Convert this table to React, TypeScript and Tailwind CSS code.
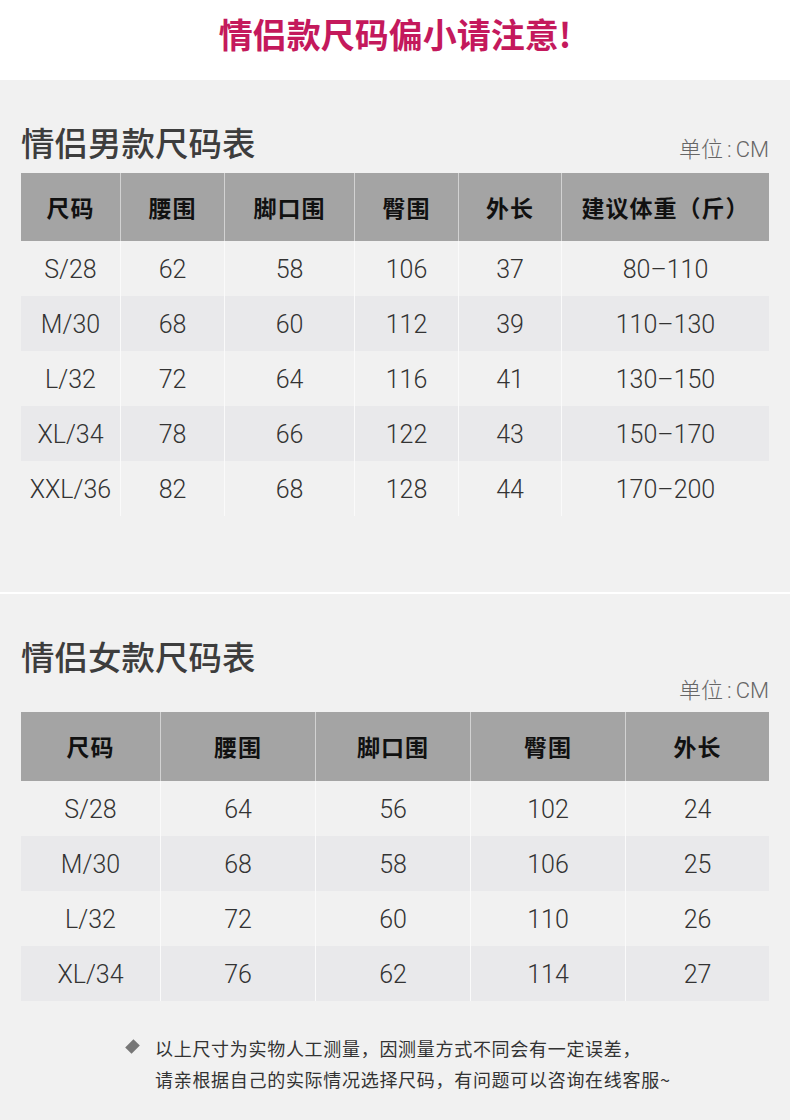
const cjk = "font-['Noto_Sans_CJK_SC',sans-serif]"
const num = "font-['Roboto','Noto_Sans_CJK_SC',sans-serif]"

const menHead = ["尺码", "腰围", "脚口围", "臀围", "外长", "建议体重（斤）"]
const menRows = [
  ["S/28", "62", "58", "106", "37", "80–110"],
  ["M/30", "68", "60", "112", "39", "110–130"],
  ["L/32", "72", "64", "116", "41", "130–150"],
  ["XL/34", "78", "66", "122", "43", "150–170"],
  ["XXL/36", "82", "68", "128", "44", "170–200"],
]

const womenHead = ["尺码", "腰围", "脚口围", "臀围", "外长"]
const womenRows = [
  ["S/28", "64", "56", "102", "24"],
  ["M/30", "68", "58", "106", "25"],
  ["L/32", "72", "60", "110", "26"],
  ["XL/34", "76", "62", "114", "27"],
]

const SizeTable = ({ head, rows, cols, headH }: { head: string[]; rows: string[][]; cols: string; headH: string }) => (
  <div className="w-full">
    <div className={`grid ${cols} ${headH} bg-[#a4a4a4]`}>
      {head.map((h, i) => (
        <div
          key={h}
          className={`flex items-center justify-center text-[23px] font-bold tracking-[1px] text-[#111] ${cjk} ${i > 0 ? "border-l border-[#d2d2d2]" : ""}`}
        >
          {h}
        </div>
      ))}
    </div>
    {rows.map((r, ri) => (
      <div key={r[0]} className={`grid ${cols} h-[55px] ${ri % 2 === 1 ? "bg-[#e9e9eb]" : "bg-[#f1f1f1]"}`}>
        {r.map((c, i) => (
          <div
            key={i}
            className={`flex items-center justify-center pt-[3px] text-[25px] font-light text-[#333] ${num} ${i > 0 ? "border-l border-[#fafafa]" : ""}`}
          >
            {c}
          </div>
        ))}
      </div>
    ))}
  </div>
)

const Unit = () => (
  <span className={`text-[22px] leading-[22px] font-light text-[#666] ${num}`}>
    单位<span className="mx-[4px]">:</span>CM
  </span>
)

export default function App() {
  return (
    <div className="w-[790px] h-[1120px] bg-[#f1f1f1] overflow-hidden">
      {/* banner */}
      <div className="h-[80px] bg-white pt-[12px]">
        <div className={`text-center text-[34px] leading-[44px] font-bold text-[#c4195c] ${cjk}`}>
          情侣款尺码偏小请注意!
        </div>
      </div>

      {/* men */}
      <div className="h-[512px] px-[21px] pt-[42px]">
        <div className="flex items-end justify-between">
          <div className={`h-[40px] text-[33.5px] leading-[40px] font-medium text-[#3d3d3d] ${cjk}`}>情侣男款尺码表</div>
          <div className="leading-[22px]">
            <Unit />
          </div>
        </div>
        <div className="mt-[11px]">
          <SizeTable
            head={menHead}
            rows={menRows}
            headH="h-[68px]"
            cols="grid-cols-[99px_104px_130px_104px_103px_1fr]"
          />
        </div>
      </div>

      <div className="h-[2px] bg-white" />

      {/* women */}
      <div className="px-[21px] pt-[42px]">
        <div className={`h-[40px] text-[33.5px] leading-[40px] font-medium text-[#3d3d3d] ${cjk}`}>情侣女款尺码表</div>
        <div className="mt-[4px] text-right leading-[22px]">
          <Unit />
        </div>
        <div className="mt-[9px]">
          <SizeTable
            head={womenHead}
            rows={womenRows}
            headH="h-[69px]"
            cols="grid-cols-[139px_155px_155px_155px_1fr]"
          />
        </div>

        <div className={`mt-[32px] flex pl-[107px] text-[18px] leading-[31px] tracking-[0.7px] text-[#333] ${cjk}`}>
          <div className="w-[27px] pt-[9px]">
            <div className="h-[9px] w-[9px] rotate-45 scale-y-[1.3] bg-[#777]" />
          </div>
          <div>
            <div>以上尺寸为实物人工测量，因测量方式不同会有一定误差，</div>
            <div>请亲根据自己的实际情况选择尺码，有问题可以咨询在线客服~</div>
          </div>
        </div>
      </div>
    </div>
  )
}
